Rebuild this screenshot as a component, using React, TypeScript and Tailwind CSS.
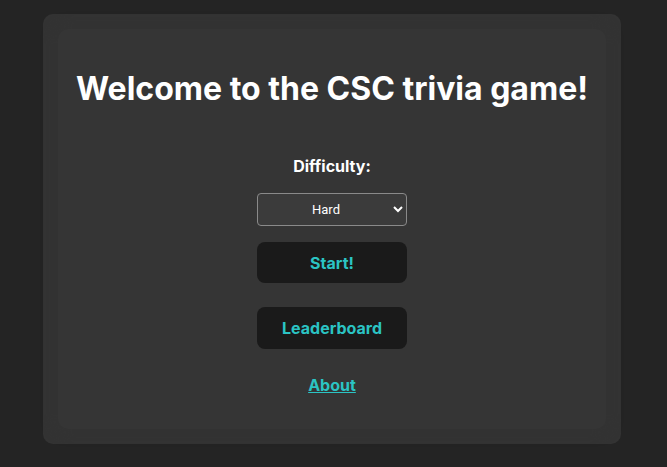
import { useState } from "react";

export default function App() {
  const [difficulty, setDifficulty] = useState("hard");

  return (
    <div className="min-h-screen w-full bg-[#242424] pt-[14px] font-['Inter',sans-serif]">
      <div className="ml-[43px] w-[578px] h-[430px] rounded-[10px] bg-[#333333] p-[15px]">
        <div className="h-full w-full rounded-[10px] bg-[#353535] shadow-[0_0_12px_4px_rgba(51,51,51,0.9)] flex flex-col items-center pt-[40px]">
          <h1 className="text-[32px] font-bold text-white leading-[40px]">
            Welcome to the CSC trivia game!
          </h1>

          <label className="mt-[47px] text-[16px] font-bold text-white leading-[20px]">
            Difficulty:
          </label>

          <select
            value={difficulty}
            onChange={(e) => setDifficulty(e.target.value)}
            className="mt-[17px] w-[150px] h-[33px] rounded-[4px] border border-[#8a8a8a] bg-[#3b3b3b] text-white text-[13px] text-center font-['Roboto',sans-serif] px-2"
          >
            <option value="easy">Easy</option>
            <option value="medium">Medium</option>
            <option value="hard">Hard</option>
          </select>

          <button className="mt-[16px] w-[150px] h-[41px] rounded-[8px] bg-[#1a1a1a] text-[#2bc4c4] text-[16px] font-bold">
            Start!
          </button>

          <button className="mt-[24px] w-[150px] h-[42px] rounded-[8px] bg-[#1a1a1a] text-[#2bc4c4] text-[16px] font-bold">
            Leaderboard
          </button>

          <a
            href="#"
            className="mt-[24px] text-[16px] font-bold text-[#2bc4c4] underline"
          >
            About
          </a>
        </div>
      </div>
    </div>
  );
}
